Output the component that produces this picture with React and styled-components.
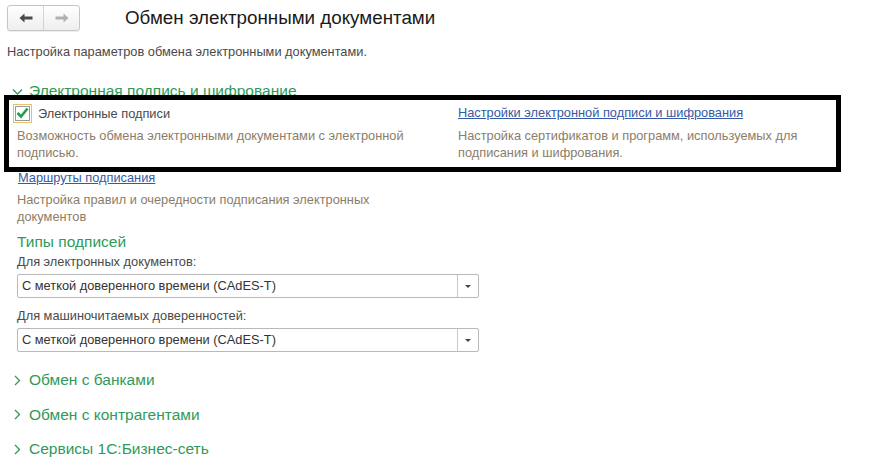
import React from 'react';
import styled, { createGlobalStyle } from 'styled-components';

const GlobalStyle = createGlobalStyle`
  html, body {
    margin: 0;
    padding: 0;
    background: #ffffff;
  }
  body {
    font-family: "Liberation Sans", Arial, sans-serif;
    font-size: 12.8px;
    color: #4d4d4d;
  }
`;

const colors = {
  green: '#2f9a5a',
  link: '#3659a6',
  hint: '#8c7d68',
  text: '#4a4a4a',
};

const Page = styled.div`
  width: 870px;
  height: 473px;
  overflow: hidden;
  padding: 4px 0 0 7px;
  box-sizing: border-box;
`;

const Header = styled.div`
  display: flex;
  align-items: center;
  height: 28px;
`;

const NavGroup = styled.div`
  display: flex;
  width: 73px;
  height: 26px;
  border: 1px solid #c6c6c6;
  border-radius: 3px;
  background: linear-gradient(#ffffff, #eeeeee);
  box-sizing: border-box;
  box-shadow: 0 1px 1px rgba(0, 0, 0, 0.08);
`;

const NavButton = styled.div`
  flex: 1;
  display: flex;
  align-items: center;
  justify-content: center;
  & + & {
    border-left: 1px solid #d4d4d4;
  }
`;

const Title = styled.h1`
  margin: 0 0 0 45px;
  font-size: 18.8px;
  font-weight: normal;
  color: #1a1a1a;
  line-height: 28px;
`;

const Subtitle = styled.div`
  margin-top: 12px;
  line-height: 16px;
  color: ${colors.text};
`;

const SectionHead = styled.div`
  display: flex;
  align-items: center;
  gap: 6px;
  padding-left: 5px;
  height: 20px;
  margin-top: ${p => p.$mt || 0}px;
  color: ${colors.green};
  font-size: 15.5px;
`;

/* black outline around the signature settings row */
const Frame = styled.div`
  position: relative;
  margin: -6px 0 0 -3px;
  width: 837px;
  border: 5px solid #000;
  background: #fff;
  box-sizing: border-box;
  display: grid;
  grid-template-columns: 445px 1fr;
  padding: 3px 0 6px 4px;
`;

const Column = styled.div`
  display: flex;
  flex-direction: column;
`;

const CheckRow = styled.label`
  display: flex;
  align-items: center;
  gap: 6px;
  height: 20px;
  color: ${colors.text};
`;

const CheckBox = styled.span`
  width: 15px;
  height: 15px;
  border: 1px solid #e6c26a;
  padding: 1px;
  display: flex;
  align-items: center;
  justify-content: center;
  box-sizing: content-box;
  & > span {
    width: 13px;
    height: 13px;
    border: 1px solid #9a9a9a;
    display: flex;
    align-items: center;
    justify-content: center;
    background: #fff;
  }
`;

const Link = styled.a`
  color: ${colors.link};
  text-decoration: underline;
  line-height: 20px;
  display: inline-block;
  cursor: pointer;
`;

const Hint = styled.div`
  color: ${colors.hint};
  line-height: 17px;
  margin-top: ${p => p.$mt || 3}px;
  padding-left: ${p => p.$pl || 0}px;
  max-width: ${p => p.$mw || 420}px;
`;

const Block = styled.div`
  padding-left: ${p => p.$pl || 10}px;
  margin-top: ${p => p.$mt || 0}px;
`;

const GroupTitle = styled.div`
  color: ${colors.green};
  font-size: 15.5px;
  line-height: 20px;
  margin-top: 7px;
`;

const FieldLabel = styled.div`
  color: ${colors.text};
  line-height: 16px;
  margin-top: ${p => p.$mt || 2}px;
`;

const Select = styled.div`
  display: flex;
  width: 462px;
  height: 24px;
  margin-top: 4px;
  border: 1px solid #b9b9b9;
  border-radius: 2px;
  box-sizing: border-box;
  background: #fff;
  color: #333;
`;

const SelectValue = styled.div`
  flex: 1;
  padding-left: 4px;
  line-height: 22px;
`;

const SelectButton = styled.div`
  width: 20px;
  border-left: 1px solid #c8c8c8;
  display: flex;
  align-items: center;
  justify-content: center;
  &::after {
    content: '';
    border-left: 3px solid transparent;
    border-right: 3px solid transparent;
    border-top: 3px solid #444;
  }
`;

const Arrow = ({ dir, color }) => (
  <svg width="14" height="10" viewBox="0 0 14 10">
    <g transform={dir === 'right' ? 'matrix(-1 0 0 1 14 0)' : undefined} fill={color}>
      <path d="M0.5 5 L5.5 0.5 L5.5 3.6 L13.5 3.6 L13.5 6.4 L5.5 6.4 L5.5 9.5 Z" />
    </g>
  </svg>
);

const Chevron = ({ open }) => (
  <svg width="11" height="11" viewBox="0 0 11 11">
    {open ? (
      <path d="M1 3.5 L5.5 8 L10 3.5" fill="none" stroke={colors.green} strokeWidth="1.3" />
    ) : (
      <path d="M3 1 L7.5 5.5 L3 10" fill="none" stroke={colors.green} strokeWidth="1.3" />
    )}
  </svg>
);

const Check = () => (
  <svg width="13" height="12" viewBox="0 0 13 12">
    <path d="M1.5 6 L5 9.5 L11.5 1.5" fill="none" stroke="#20a04a" strokeWidth="2.6" />
  </svg>
);

const signatureFields = [
  'Для электронных документов:',
  'Для машиночитаемых доверенностей:',
];

const collapsed = ['Обмен с банками', 'Обмен с контрагентами', 'Сервисы 1С:Бизнес-сеть'];

export default function App() {
  return (
    <Page>
      <GlobalStyle />
      <Header>
        <NavGroup>
          <NavButton>
            <Arrow dir="left" color="#4a4a4a" />
          </NavButton>
          <NavButton>
            <Arrow dir="right" color="#b0b0b0" />
          </NavButton>
        </NavGroup>
        <Title>Обмен электронными документами</Title>
      </Header>

      <Subtitle>Настройка параметров обмена электронными документами.</Subtitle>

      <SectionHead $mt={21}>
        <Chevron open />
        Электронная подпись и шифрование
      </SectionHead>

      <Frame>
        <Column>
          <CheckRow>
            <CheckBox>
              <span>
                <Check />
              </span>
            </CheckBox>
            Электронные подписи
          </CheckRow>
          <Hint $pl={4} $mt={4}>
            Возможность обмена электронными документами с электронной подписью.
          </Hint>
        </Column>
        <Column>
          <Link>Настройки электронной подписи и шифрования</Link>
          <Hint $mt={4} $mw={360}>
            Настройка сертификатов и программ, используемых для подписания и шифрования.
          </Hint>
        </Column>
      </Frame>

      <Block $pl={11} $mt={-4}>
        <Link>Маршруты подписания</Link>
      </Block>
      <Block>
        <Hint $mt={3} $mw={370}>
          Настройка правил и очередности подписания электронных документов
        </Hint>
        <GroupTitle>Типы подписей</GroupTitle>
        {signatureFields.map((label, i) => (
          <div key={label}>
            <FieldLabel $mt={i === 0 ? 2 : 10}>{label}</FieldLabel>
            <Select>
              <SelectValue>С меткой доверенного времени (CAdES-T)</SelectValue>
              <SelectButton />
            </Select>
          </div>
        ))}
      </Block>

      {collapsed.map((title, i) => (
        <SectionHead key={title} $mt={i === 0 ? 18 : 14.5}>
          <Chevron />
          {title}
        </SectionHead>
      ))}
    </Page>
  );
}
